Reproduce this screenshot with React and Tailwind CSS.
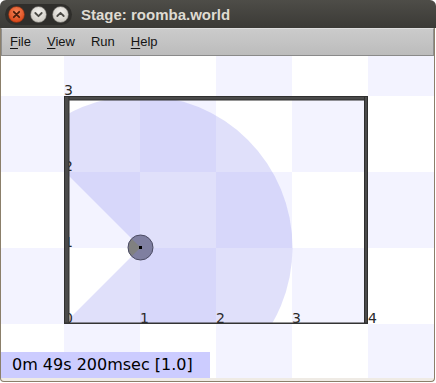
import React from 'react';

const CELL = 76;
const OX = 64;   // world x=0 in page px
const OY = 324;  // world y=0 in page px

const Checker = () => {
    const cells = [];
    for (let i = -1; i <= 4; i++) {
        for (let j = -1; j <= 3; j++) {
            if ((i + j) % 2 !== 0) {
                cells.push(
                    <rect key={i + '_' + j} x={OX + CELL * i} y={OY - CELL * 3 + CELL * j} width={CELL} height={CELL} fill="#f3f3ff" />
                );
            }
        }
    }
    return <g>{cells}</g>;
};

const WinButton = ({ kind }) => {
    if (kind === 'close') {
        return (
            <svg width="17" height="17" viewBox="0 0 17 17">
                <defs>
                    <radialGradient id="cg" cx="50%" cy="35%" r="60%">
                        <stop offset="0" stopColor="#f7875a" />
                        <stop offset="1" stopColor="#d9481a" />
                    </radialGradient>
                </defs>
                <circle cx="8.5" cy="8.5" r="8" fill="url(#cg)" stroke="#7a2e12" strokeWidth="0.6" />
                <path d="M5.8 5.8 L11.2 11.2 M11.2 5.8 L5.8 11.2" stroke="#4a1e0c" strokeWidth="1.8" strokeLinecap="round" />
            </svg>
        );
    }
    return (
        <svg width="17" height="17" viewBox="0 0 17 17">
            <defs>
                <radialGradient id={'g' + kind} cx="50%" cy="35%" r="60%">
                    <stop offset="0" stopColor="#f4f2ee" />
                    <stop offset="1" stopColor="#cfccc5" />
                </radialGradient>
            </defs>
            <circle cx="8.5" cy="8.5" r="8" fill={'url(#g' + kind + ')'} stroke="#5e5c57" strokeWidth="0.6" />
            {kind === 'min' ? (
                <path d="M5.3 7 L8.5 10.2 L11.7 7" fill="none" stroke="#4c4b46" strokeWidth="1.8" strokeLinecap="round" strokeLinejoin="round" />
            ) : (
                <path d="M5.3 10 L8.5 6.8 L11.7 10" fill="none" stroke="#4c4b46" strokeWidth="1.8" strokeLinecap="round" strokeLinejoin="round" />
            )}
        </svg>
    );
};

const MenuItem = ({ first, rest }) => (
    <span className="px-2 text-[13px] text-[#141414]">
        {first ? <span className="underline underline-offset-2">{first}</span> : null}
        {rest}
    </span>
);

const World = () => {
    const cx = 140.5;
    const cy = 247.5;
    const r = 152;
    const d = r * Math.SQRT1_2;
    const fan = `M${cx} ${cy} L${cx - d} ${cy - d} A${r} ${r} 0 1 1 ${cx - d} ${cy + d} Z`;
    const labels = [
        { t: '0', x: 64, y: 323 },
        { t: '1', x: 140, y: 323 },
        { t: '2', x: 216, y: 323 },
        { t: '3', x: 292, y: 323 },
        { t: '4', x: 368, y: 323 },
        { t: '1', x: 64, y: 247 },
        { t: '2', x: 64, y: 171 },
        { t: '3', x: 64, y: 95 },
    ];
    return (
        <svg width="433" height="322" className="block">
            <defs>
                <clipPath id="box">
                    <rect x="64" y="96" width="304" height="228" />
                </clipPath>
            </defs>
            <g transform="translate(-1,-56)">
                <rect x="0" y="0" width="440" height="400" fill="#ffffff" />
                <Checker />
                <path d={fan} fill="#9999ee" fillOpacity="0.3" clipPath="url(#box)" />
                {labels.map((l, k) => (
                    <text key={k} x={l.x} y={l.y} fontFamily="'DejaVu Sans', sans-serif" fontSize="14" fill="#2a2a2a">
                        {l.t}
                    </text>
                ))}
                {/* walls */}
                <rect x="64.5" y="96.5" width="303" height="3.5" fill="#4a4a4a" stroke="#2f2f2f" />
                <rect x="64.5" y="96.5" width="4.5" height="227" fill="#4a4a4a" stroke="#2f2f2f" />
                <rect x="364.5" y="96.5" width="3" height="227" fill="#4a4a4a" stroke="#2f2f2f" />
                <rect x="64" y="322.5" width="304" height="1.5" fill="#333333" />
                {/* robot */}
                <circle cx={cx} cy={cy} r="12.5" fill="#7f7fa0" />
                <path
                    d={`M${cx} ${cy} L${cx - 8.8} ${cy - 8.8} A12.5 12.5 0 0 0 ${cx - 8.8} ${cy + 8.8} Z`}
                    fill="#808080"
                />
                <circle cx={cx} cy={cy} r="12.5" fill="none" stroke="#4a4a62" strokeWidth="1" />
                <rect x={cx - 1.5} y={cy - 1.5} width="3" height="3" fill="#000000" />
            </g>
        </svg>
    );
};

const App = () => {
    return (
        <div className="w-[436px] h-[383px] bg-white overflow-hidden flex flex-col font-['Liberation_Sans',sans-serif]">
            <div className="h-[28px] shrink-0 rounded-t-[6px] bg-gradient-to-b from-[#4e4d48] to-[#3b3a36] flex items-center pl-[5px]">
                <div className="flex items-center gap-[5px] rounded-full bg-[#2f2e2b] px-[3px] py-[2px]">
                    <WinButton kind="close" />
                    <WinButton kind="min" />
                    <WinButton kind="max" />
                </div>
                <span className="ml-[9px] text-[15px] font-bold text-[#dfdbd2] leading-none">Stage: roomba.world</span>
            </div>
            <div className="w-[435px] h-[354px] flex flex-col border-x border-b border-[#8b7f6a] rounded-b-[4px] bg-[#efebe5]">
                <div className="h-[28px] shrink-0 flex items-center bg-gradient-to-b from-[#cbcbcb] to-[#bcbcbc] border border-t-[#dedede] border-x-[#8f8f8f] border-b-[#8a8a8a]">
                    <MenuItem first="F" rest="ile" />
                    <MenuItem first="V" rest="iew" />
                    <MenuItem rest="Run" />
                    <MenuItem first="H" rest="elp" />
                </div>
                <div className="relative h-[322px] shrink-0 bg-white overflow-hidden">
                    <World />
                    <div className="absolute left-0 bottom-0 w-[209px] h-[26px] bg-[#ccccff] flex items-center pl-[11px] font-['DejaVu_Sans',sans-serif] text-[16px] text-black leading-none">
                        0m 49s 200msec [1.0]
                    </div>
                </div>
            </div>
        </div>
    );
};

export default App;
